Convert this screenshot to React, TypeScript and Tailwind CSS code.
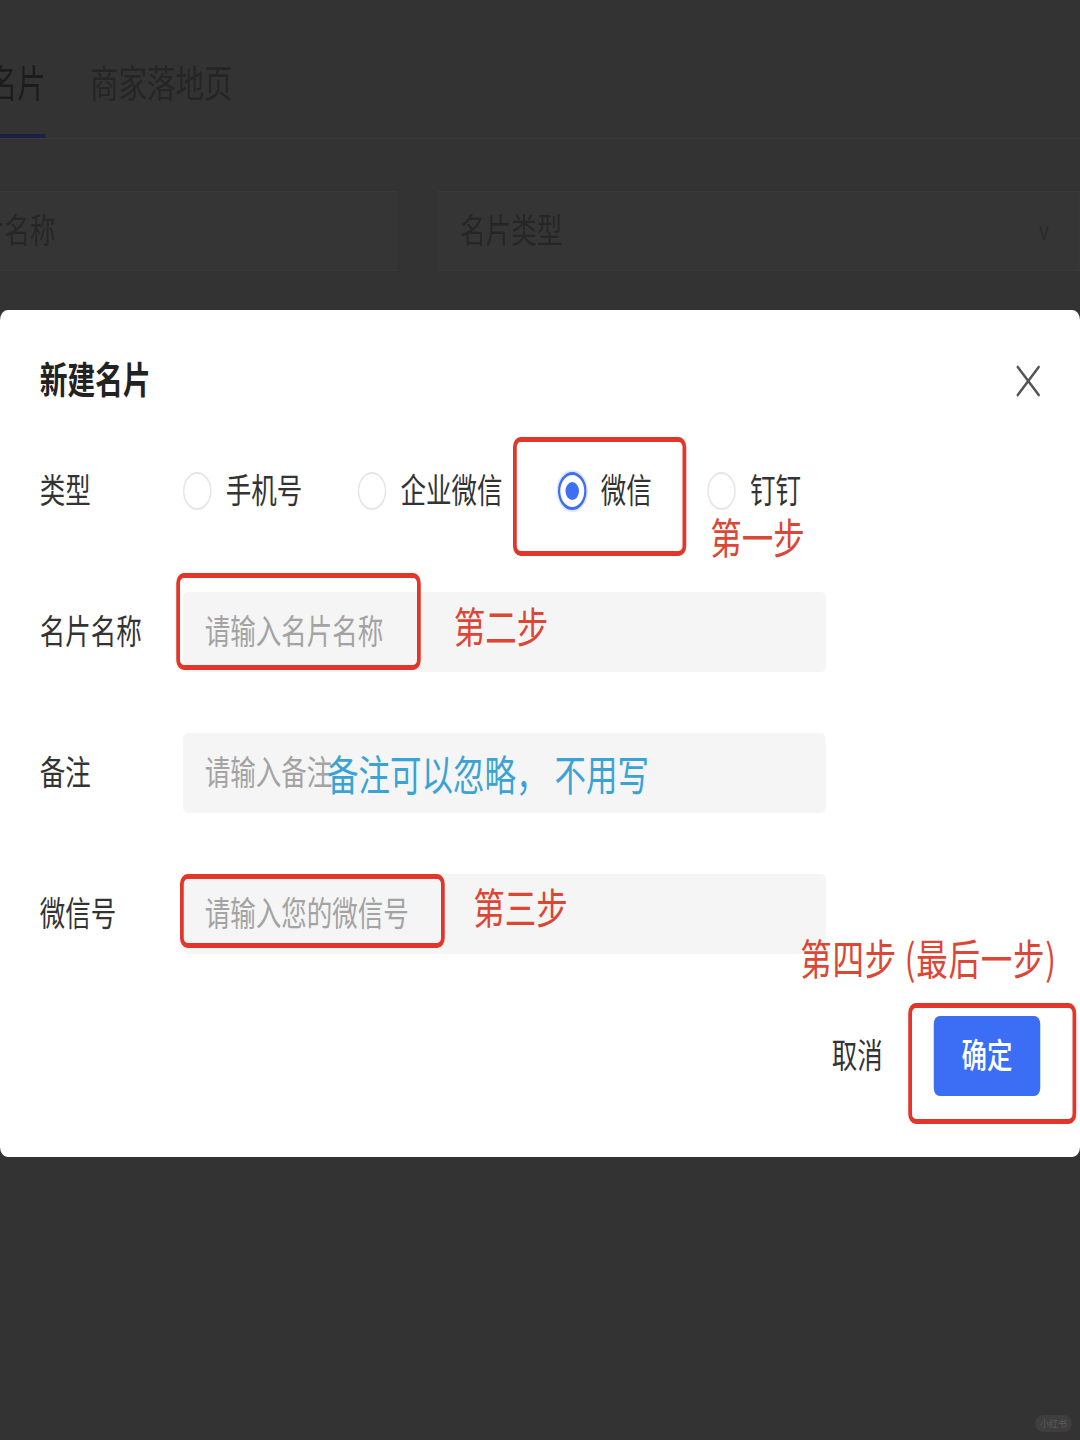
import { X } from "lucide-react";

const types = [
  { label: "手机号", checked: false },
  { label: "企业微信", checked: false },
  { label: "微信", checked: true },
  { label: "钉钉", checked: false },
];

function Radio({ checked }: { checked: boolean }) {
  if (checked) {
    return (
      <span className="flex h-[38px] w-[38px] shrink-0 items-center justify-center rounded-full border-[3px] border-[#3d6ef3] shadow-[0_0_0_2px_#dfe7fd]">
        <span className="h-[18px] w-[18px] rounded-full bg-[#3d6ef3]" />
      </span>
    );
  }
  return <span className="h-[38px] w-[38px] shrink-0 rounded-full border-2 border-[#e6e6e6]" />;
}

function Field({ placeholder }: { placeholder: string }) {
  return (
    <div className="flex h-[80px] w-[857px] items-center rounded-[6px] bg-[#f5f5f5] pb-[6px] pl-[29px] text-[34px] text-[#a3a3a3]">
      {placeholder}
    </div>
  );
}

export default function App() {
  return (
    <div className="relative h-[1440px] w-[1080px] overflow-hidden bg-[#333333] font-['Noto_Sans_CJK_SC','Noto_Sans',sans-serif]">
      {/* the shot is squeezed sideways, so lay out 1440 wide and squeeze back */}
      <div className="w-[1440px] origin-top-left scale-x-75">
        {/* dimmed page behind the dialog */}
        <div className="flex border-b border-[#3a3a3a]">
          <div className="-ml-[15px] flex gap-[59px]">
            <div className="h-[138px] border-b-4 border-[#1f2048] pt-[60px] text-[38px] leading-[42px] text-[#1c1c1c]">名片</div>
            <div className="h-[138px] pt-[60px] text-[38px] leading-[42px] text-[#252525]">商家落地页</div>
          </div>
        </div>

        <div className="-ml-[93px] mt-[52px] flex gap-[54px]">
          <div className="flex h-[80px] w-[633px] items-center border border-[#393939] bg-[#353535] pb-[6px] pl-[30px] text-[34px] text-[#262626]">
            名片名称
          </div>
          <div className="flex h-[80px] w-[870px] items-center justify-between border border-[#393939] bg-[#353535] pb-[6px] pl-[29px] pr-[40px] text-[34px] text-[#262626]">
            <span>名片类型</span>
            <span className="text-[26px] text-[#2a2a2a]">v</span>
          </div>
        </div>

        {/* dialog */}
        <div className="relative mt-[39px] rounded-[10px] bg-white px-[53px] pb-[61px] pt-[49px]">
          <div className="flex h-[44px] items-center justify-between">
            <h2 className="pb-[6px] text-[37px] font-semibold leading-[44px] text-[#222]">新建名片</h2>
            <X className="-my-[6px] -mr-[12px] h-[56px] w-[56px] text-[#555]" strokeWidth={1.3} />
          </div>

          <div className="mt-[48px] flex flex-col gap-[61px]">
            <div className="flex h-[80px] items-center">
              <div className="w-[191px] pb-[6px] text-[34px] text-[#333]">类型</div>
              <div className="flex gap-[74px]">
                {types.map((t) => (
                  <label key={t.label} className="flex items-center gap-[19px] text-[34px] text-[#333]">
                    <Radio checked={t.checked} />
                    <span className="pb-[5px]">{t.label}</span>
                  </label>
                ))}
              </div>
            </div>

            <div className="flex h-[80px] items-center">
              <div className="w-[191px] pb-[6px] text-[34px] text-[#333]">名片名称</div>
              <Field placeholder="请输入名片名称" />
            </div>

            <div className="flex h-[80px] items-center">
              <div className="w-[191px] pb-[6px] text-[34px] text-[#333]">备注</div>
              <Field placeholder="请输入备注" />
            </div>

            <div className="flex h-[80px] items-center">
              <div className="w-[191px] pb-[6px] text-[34px] text-[#333]">微信号</div>
              <Field placeholder="请输入您的微信号" />
            </div>
          </div>

          <div className="mt-[62px] flex items-center justify-end gap-[68px]">
            <button className="pb-[6px] text-[34px] text-[#333]">取消</button>
            <button className="h-[80px] w-[142px] rounded-[8px] bg-[#3c6ef5] pb-[6px] text-[34px] font-medium text-white">确定</button>
          </div>

          {/* hand-drawn step notes over the dialog */}
          <div className="absolute left-[684px] top-[127px] h-[119px] w-[231px] rounded-[10px] border-[5px] border-[#e2362a]" />
          <div className="absolute left-[947px] top-[205px] text-[42px] leading-[42px] text-[#dc4634]">第一步</div>

          <div className="absolute left-[235px] top-[263px] h-[97px] w-[326px] rounded-[10px] border-[5px] border-[#e2362a]" />
          <div className="absolute left-[605px] top-[294px] text-[42px] leading-[42px] text-[#dc4634]">第二步</div>

          <div className="absolute left-[436px] top-[442px] whitespace-nowrap text-[42px] leading-[42px] text-[#3aa3d6]">备注可以忽略， 不用写</div>

          <div className="absolute left-[240px] top-[564px] h-[74px] w-[353px] rounded-[10px] border-[5px] border-[#e2362a]" />
          <div className="absolute left-[631px] top-[575px] text-[42px] leading-[42px] text-[#dc4634]">第三步</div>

          <div className="absolute left-[1067px] top-[626px] whitespace-nowrap text-[42px] leading-[42px] tracking-[1px] text-[#dc4634]">第四步 (最后一步)</div>
          <div className="absolute left-[1211px] top-[693px] h-[121px] w-[224px] rounded-[10px] border-[5px] border-[#e2362a]" />
        </div>
      </div>

      <div className="absolute bottom-[8px] right-[8px] flex h-[17px] w-[37px] items-center justify-center rounded-full bg-[#3e3e3e] text-[9px] text-[#5a5a5a]">
        小红书
      </div>
    </div>
  );
}
